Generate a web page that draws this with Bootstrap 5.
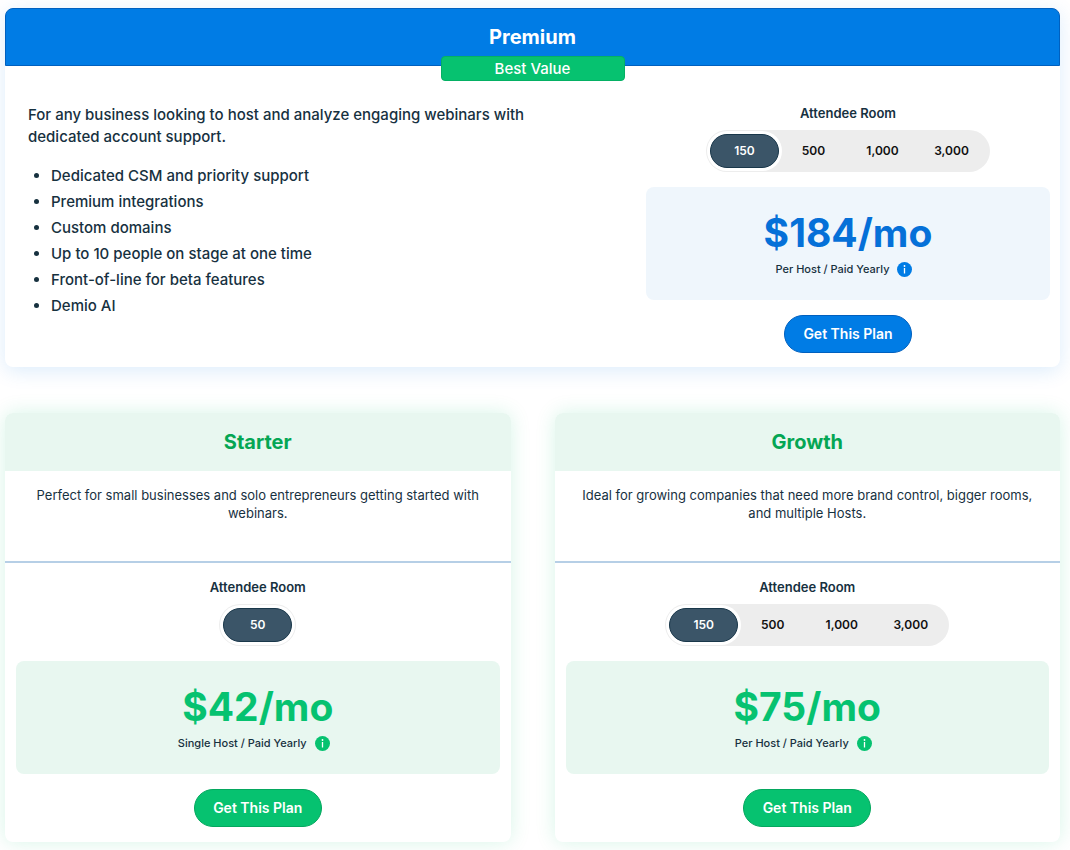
<!DOCTYPE html>
<html lang="en">
<head>
<meta charset="utf-8">
<meta name="viewport" content="width=device-width, initial-scale=1">
<title>Webinar plans</title>
<link href="https://cdn.jsdelivr.net/npm/bootstrap@5.3.0/dist/css/bootstrap.min.css" rel="stylesheet">
<style>
  body { font-family: Inter, "Liberation Sans", sans-serif; color: #17313f; background: #fff; }
  .plans { padding: 8px 10px 8px 5px; }
  .plan-grid { display: grid; gap: 44px; }
  .plan { border-radius: 8px; background: #fff; box-shadow: 0 0 20px rgba(0, 190, 110, .16); --tone: #06c270; --tone-edge: #04a75e; --tint: #e8f7f0; }
  .plan-premium { box-shadow: 0 4px 20px rgba(0, 122, 228, .14); --tone: #007ce5; --tone-edge: #0060bf; --tint: #eff6fc; margin-bottom: 46px; }
  .plan-head { position: relative; height: 58px; border-radius: 8px 8px 0 0; background: var(--tint); }
  .plan-head h2 { font-size: 20px; line-height: 24px; font-weight: 700; color: #04a654; }
  .plan-premium .plan-head { background: var(--tone); border: 1px solid var(--tone-edge); }
  .plan-premium .plan-head h2 { color: #fff; }
  .ribbon { position: absolute; top: 47px; left: 50%; transform: translateX(-50%); width: 184px; height: 25px; border-radius: 4px; background: #06c270; border: 1px solid #04b064; color: #fff; font-size: 15px; line-height: 23px; font-weight: 500; text-align: center; }
  .pitch { padding: 38px 24px 24px 23px; font-size: 15px; line-height: 22px; font-weight: 500; }
  .pitch p { margin-bottom: 17px; max-width: 520px; }
  .pitch ul { padding-left: 23px; }
  .pitch li { margin-bottom: 4px; }
  .blurb { min-height: 92px; padding: 15px 24px; border-bottom: 2px solid #b6cfe6; font-size: 13px; line-height: 18px; }
  .blurb p { max-width: 460px; }
  .offer { padding: 14px 11px 15px; }
  .plan-premium .offer { padding: 37px 10px 14px 8px; }
  .room-label { font-size: 13px; line-height: 20px; font-weight: 600; margin-bottom: 7px; }
  .rooms { padding: 4px; border-radius: 21px; background: #ededed; margin-bottom: 15px; }
  .rooms label { width: 69px; height: 34px; border-radius: 17px; font-size: 12px; line-height: 31px; font-weight: 600; color: #111; border: 1px solid transparent; cursor: pointer; }
  .rooms .btn-check:checked + label { background: #3b5568; border-color: #19374a; color: #fff; box-shadow: 0 0 0 3px #fff; }
  .price-box { padding: 22px 12px 21px; border-radius: 8px; background: var(--tint); margin-bottom: 15px; }
  .price { font-size: 39px; line-height: 48px; font-weight: 700; color: var(--tone); margin-bottom: 2px; }
  .plan-premium .price { color: #0570d8; }
  .terms { font-size: 11px; line-height: 20px; font-weight: 500; padding-right: 8px; }
  .info { width: 15px; height: 15px; color: var(--tone); background: none; }
  .info svg { display: block; }
  .btn-plan { width: 128px; height: 38px; border: 1px solid var(--tone-edge); border-radius: 19px; background: var(--tone); color: #fff; font-size: 14px; line-height: 20px; font-weight: 600; }
  .btn-plan:hover { background: var(--tone-edge); color: #fff; }
  @media (min-width: 768px) {
    .offer-col { width: 40%; }
    .plan-grid { grid-template-columns: 1fr 1fr; }
  }
</style>
</head>
<body>
<main class="plans">
  <section class="plan plan-premium">
    <header class="plan-head d-flex align-items-center justify-content-center">
      <h2 class="m-0">Premium</h2>
      <span class="ribbon">Best Value</span>
    </header>
    <div class="row g-0">
      <div class="col-md pitch">
        <p>For any business looking to host and analyze engaging webinars with dedicated account support.</p>
        <ul class="mb-0">
          <li>Dedicated CSM and priority support</li>
          <li>Premium integrations</li>
          <li>Custom domains</li>
          <li>Up to 10 people on stage at one time</li>
          <li>Front-of-line for beta features</li>
          <li>Demio AI</li>
        </ul>
      </div>
      <div class="col-md-auto offer-col">
        <div class="offer d-flex flex-column align-items-center">
          <div class="room-label" id="rooms-premium">Attendee Room</div>
          <div class="rooms d-flex" role="radiogroup" aria-labelledby="rooms-premium">
            <input class="btn-check" type="radio" name="premium" id="p150" checked><label class="text-center" for="p150">150</label>
            <input class="btn-check" type="radio" name="premium" id="p500"><label class="text-center" for="p500">500</label>
            <input class="btn-check" type="radio" name="premium" id="p1000"><label class="text-center" for="p1000">1,000</label>
            <input class="btn-check" type="radio" name="premium" id="p3000"><label class="text-center" for="p3000">3,000</label>
          </div>
          <div class="price-box w-100 text-center">
            <div class="price">$184/mo</div>
            <div class="terms d-flex justify-content-center align-items-center gap-2"><span>Per Host / Paid Yearly</span>
              <button type="button" class="info border-0 p-0" aria-label="Billing details"><svg width="15" height="15" viewBox="0 0 15 15"><circle cx="7.5" cy="7.5" r="7.5" fill="currentColor"/><circle cx="7.5" cy="4" r=".9" fill="#fff"/><path d="M7.5 6v5.5" stroke="#fff" stroke-width="1.3"/></svg></button>
            </div>
          </div>
          <button type="button" class="btn btn-plan p-0">Get This Plan</button>
        </div>
      </div>
    </div>
  </section>

  <div class="plan-grid">
    <section class="plan">
      <header class="plan-head d-flex align-items-center justify-content-center"><h2 class="m-0">Starter</h2></header>
      <div class="blurb text-center"><p class="mx-auto mb-0">Perfect for small businesses and solo entrepreneurs getting started with webinars.</p></div>
      <div class="offer d-flex flex-column align-items-center">
        <div class="room-label" id="rooms-starter">Attendee Room</div>
        <div class="rooms d-flex" role="radiogroup" aria-labelledby="rooms-starter">
          <input class="btn-check" type="radio" name="starter" id="s50" checked><label class="text-center" for="s50">50</label>
        </div>
        <div class="price-box w-100 text-center">
          <div class="price">$42/mo</div>
          <div class="terms d-flex justify-content-center align-items-center gap-2"><span>Single Host / Paid Yearly</span>
            <button type="button" class="info border-0 p-0" aria-label="Billing details"><svg width="15" height="15" viewBox="0 0 15 15"><circle cx="7.5" cy="7.5" r="7.5" fill="currentColor"/><circle cx="7.5" cy="4" r=".9" fill="#fff"/><path d="M7.5 6v5.5" stroke="#fff" stroke-width="1.3"/></svg></button>
          </div>
        </div>
        <button type="button" class="btn btn-plan p-0">Get This Plan</button>
      </div>
    </section>
    <section class="plan">
      <header class="plan-head d-flex align-items-center justify-content-center"><h2 class="m-0">Growth</h2></header>
      <div class="blurb text-center"><p class="mx-auto mb-0">Ideal for growing companies that need more brand control, bigger rooms, and multiple Hosts.</p></div>
      <div class="offer d-flex flex-column align-items-center">
        <div class="room-label" id="rooms-growth">Attendee Room</div>
        <div class="rooms d-flex" role="radiogroup" aria-labelledby="rooms-growth">
          <input class="btn-check" type="radio" name="growth" id="g150" checked><label class="text-center" for="g150">150</label>
          <input class="btn-check" type="radio" name="growth" id="g500"><label class="text-center" for="g500">500</label>
          <input class="btn-check" type="radio" name="growth" id="g1000"><label class="text-center" for="g1000">1,000</label>
          <input class="btn-check" type="radio" name="growth" id="g3000"><label class="text-center" for="g3000">3,000</label>
        </div>
        <div class="price-box w-100 text-center">
          <div class="price">$75/mo</div>
          <div class="terms d-flex justify-content-center align-items-center gap-2"><span>Per Host / Paid Yearly</span>
            <button type="button" class="info border-0 p-0" aria-label="Billing details"><svg width="15" height="15" viewBox="0 0 15 15"><circle cx="7.5" cy="7.5" r="7.5" fill="currentColor"/><circle cx="7.5" cy="4" r=".9" fill="#fff"/><path d="M7.5 6v5.5" stroke="#fff" stroke-width="1.3"/></svg></button>
          </div>
        </div>
        <button type="button" class="btn btn-plan p-0">Get This Plan</button>
      </div>
    </section>
  </div>
</main>
<script src="https://cdn.jsdelivr.net/npm/bootstrap@5.3.0/dist/js/bootstrap.bundle.min.js"></script>
</body>
</html>
